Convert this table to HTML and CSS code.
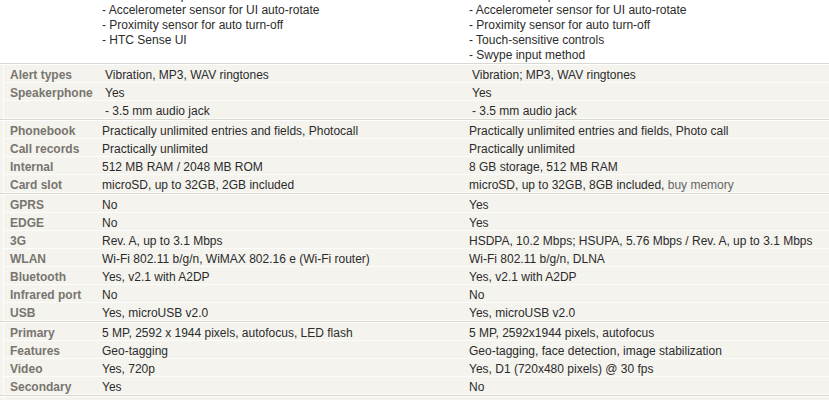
FILE: index.html
```html
<!DOCTYPE html>
<html>
<head>
<meta charset="utf-8">
<link rel="stylesheet" href="styles.css">
</head>
<body>
<div class="specs">
  <table class="sec top">
    <tr>
      <td class="lbl"></td>
      <td class="val"><div>- Multi-touch input method</div><div>- Accelerometer sensor for UI auto-rotate</div><div>- Proximity sensor for auto turn-off</div><div>- HTC Sense UI</div></td>
      <td class="val"><div>- Multi-touch input method</div><div>- Accelerometer sensor for UI auto-rotate</div><div>- Proximity sensor for auto turn-off</div><div>- Touch-sensitive controls</div><div>- Swype input method</div></td>
    </tr>
  </table>
  <div class="sep"></div>
  <table class="sec wide">
    <tr><td class="lbl">Alert types</td><td class="val">Vibration, MP3, WAV ringtones</td><td class="val">Vibration; MP3, WAV ringtones</td></tr>
    <tr><td class="lbl">Speakerphone</td><td class="val">Yes</td><td class="val">Yes</td></tr>
    <tr><td class="lbl"></td><td class="val">- 3.5 mm audio jack</td><td class="val">- 3.5 mm audio jack</td></tr>
  </table>
  <div class="sep"></div>
  <table class="sec">
    <tr><td class="lbl">Phonebook</td><td class="val">Practically unlimited entries and fields, Photocall</td><td class="val">Practically unlimited entries and fields, Photo call</td></tr>
    <tr><td class="lbl">Call records</td><td class="val">Practically unlimited</td><td class="val">Practically unlimited</td></tr>
    <tr><td class="lbl">Internal</td><td class="val">512 MB RAM / 2048 MB ROM</td><td class="val">8 GB storage, 512 MB RAM</td></tr>
    <tr><td class="lbl">Card slot</td><td class="val">microSD, up to 32GB, 2GB included</td><td class="val">microSD, up to 32GB, 8GB included, <a class="link" href="#">buy memory</a></td></tr>
  </table>
  <div class="sep"></div>
  <table class="sec">
    <tr><td class="lbl">GPRS</td><td class="val">No</td><td class="val">Yes</td></tr>
    <tr><td class="lbl">EDGE</td><td class="val">No</td><td class="val">Yes</td></tr>
    <tr><td class="lbl">3G</td><td class="val">Rev. A, up to 3.1 Mbps</td><td class="val">HSDPA, 10.2 Mbps; HSUPA, 5.76 Mbps / Rev. A, up to 3.1 Mbps</td></tr>
    <tr><td class="lbl">WLAN</td><td class="val">Wi-Fi 802.11 b/g/n, WiMAX 802.16 e (Wi-Fi router)</td><td class="val">Wi-Fi 802.11 b/g/n, DLNA</td></tr>
    <tr><td class="lbl">Bluetooth</td><td class="val">Yes, v2.1 with A2DP</td><td class="val">Yes, v2.1 with A2DP</td></tr>
    <tr><td class="lbl">Infrared port</td><td class="val">No</td><td class="val">No</td></tr>
    <tr><td class="lbl">USB</td><td class="val">Yes, microUSB v2.0</td><td class="val">Yes, microUSB v2.0</td></tr>
  </table>
  <div class="sep"></div>
  <table class="sec">
    <tr><td class="lbl">Primary</td><td class="val">5 MP, 2592 x 1944 pixels, autofocus, LED flash</td><td class="val">5 MP, 2592x1944 pixels, autofocus</td></tr>
    <tr><td class="lbl">Features</td><td class="val">Geo-tagging</td><td class="val">Geo-tagging, face detection, image stabilization</td></tr>
    <tr><td class="lbl">Video</td><td class="val">Yes, 720p</td><td class="val">Yes, D1 (720x480 pixels) @ 30 fps</td></tr>
    <tr><td class="lbl">Secondary</td><td class="val">Yes</td><td class="val">No</td></tr>
  </table>
  <div class="sep"></div>
  <table class="sec">
    <tr><td class="lbl">&nbsp;</td><td class="val">&nbsp;</td><td class="val">&nbsp;</td></tr>
  </table>
</div>
</body>
</html>
```
FILE: styles.css
```css
html, body {
  margin: 0;
  padding: 0;
  background: #fff;
  overflow: hidden;
}
body {
  font-family: "Liberation Sans", Arial, sans-serif;
  font-size: 12px;
  color: #2b2b2b;
}
.specs {
  margin-top: -12px;
  background: #f4f3ee;
}
.sec {
  width: 826px;
  margin-left: 3px;
  border-collapse: collapse;
  table-layout: fixed;
  border-left: 1px solid #fdfdfb;
}
.sec td {
  padding: 3px 0 0 0;
  height: 14px;
  line-height: 14px;
  border-bottom: 1px solid #fcfcfa;
  white-space: nowrap;
  overflow: hidden;
  vertical-align: top;
}
.sec .lbl {
  width: 92px;
  padding-left: 6px;
  font-weight: bold;
  color: #78756f;
}
.sec .val:nth-child(2) {
  width: 367px;
}
.wide .val {
  padding-left: 3px;
}
.wide .val:nth-child(2) {
  width: 364px;
}
.top {
  margin-left: 0;
  width: 829px;
  border-left: 0;
  background: #fff;
}
.top .lbl {
  width: 96px;
}
.top td {
  height: auto;
  padding-top: 0;
  line-height: 15px;
  vertical-align: top;
  border-bottom: 0;
  padding-bottom: 0;
}
.sep {
  height: 1px;
  border-top: 1px solid #d9d9d1;
  background: #fff;
}
.link {
  color: #666;
  text-decoration: none;
}
```
